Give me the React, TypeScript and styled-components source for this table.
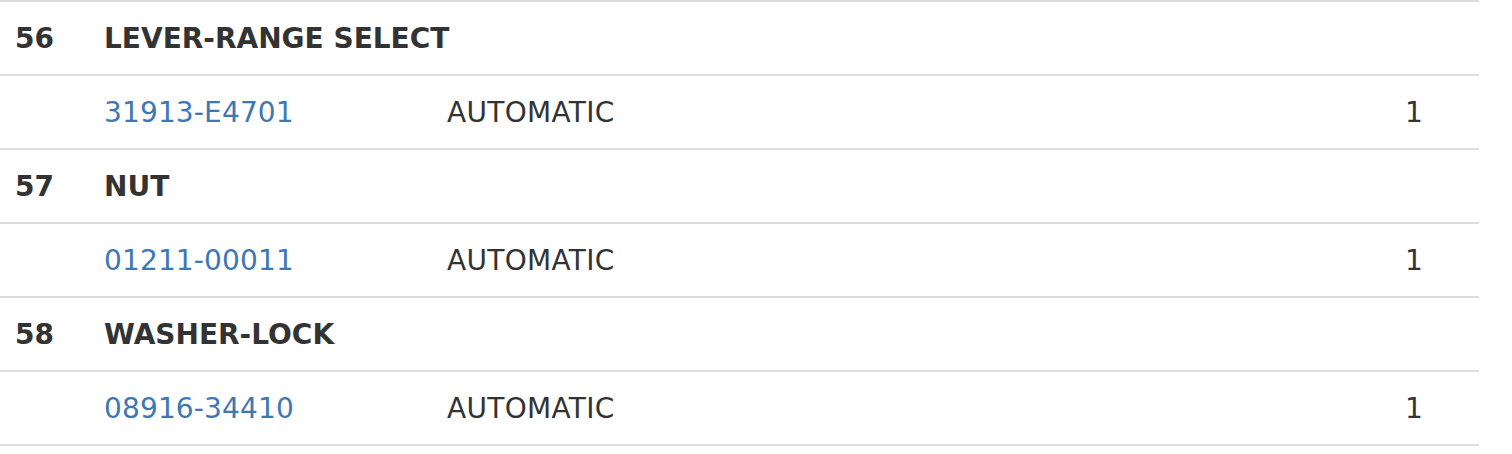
import React from 'react';
import styled, { createGlobalStyle } from 'styled-components';

const GlobalStyle = createGlobalStyle`
    body {
        margin: 0;
        background: #ffffff;
        font-family: "DejaVu Sans", Verdana, sans-serif;
        color: #333333;
    }
`;

// Tabela de peças
const PartsTable = styled.div`
    width: 1479px;
    border-top: 2px solid #dddddd;
`;

const Row = styled.div`
    display: grid;
    grid-template-columns: 90px 342px 1fr 120px;
    align-items: center;
    height: 72px;
    border-bottom: 2px solid #dddddd;
    font-size: 28px;
`;

const Cell = styled.div<{ $bold?: boolean; $right?: boolean }>`
    padding: 0 14px 0 15px;
    font-weight: ${(p) => (p.$bold ? 'bold' : 'normal')};
    letter-spacing: ${(p) => (p.$bold ? '0' : '0.3px')};
    text-align: ${(p) => (p.$right ? 'right' : 'left')};
    white-space: nowrap;
`;

const QtyCell = styled(Cell)`
    padding-right: 56px;
`;

const TitleCell = styled(Cell)`
    grid-column: 2 / span 3;
    padding-left: 14px;
`;

const LinkCell = styled(Cell)`
    padding-left: 14px;
    letter-spacing: 0.15px;
`;

const PartLink = styled.a`
    color: #3d78b4;
    text-decoration: none;
`;

type Part = { number: string; code: string; name: string; desc: string; qty: number };

const parts: Part[] = [
    { number: '56', name: 'LEVER-RANGE SELECT', code: '31913-E4701', desc: 'AUTOMATIC', qty: 1 },
    { number: '57', name: 'NUT', code: '01211-00011', desc: 'AUTOMATIC', qty: 1 },
    { number: '58', name: 'WASHER-LOCK', code: '08916-34410', desc: 'AUTOMATIC', qty: 1 },
];

const App = () => {
    return (
        <>
            <GlobalStyle />
            <PartsTable>
                {parts.map((p) => (
                    <React.Fragment key={p.number}>
                        <Row>
                            <Cell $bold>{p.number}</Cell>
                            <TitleCell $bold>{p.name}</TitleCell>
                        </Row>
                        <Row>
                            <Cell />
                            <LinkCell>
                                <PartLink href="#">{p.code}</PartLink>
                            </LinkCell>
                            <Cell>{p.desc}</Cell>
                            <QtyCell $right>{p.qty}</QtyCell>
                        </Row>
                    </React.Fragment>
                ))}
            </PartsTable>
        </>
    );
};

export default App;
